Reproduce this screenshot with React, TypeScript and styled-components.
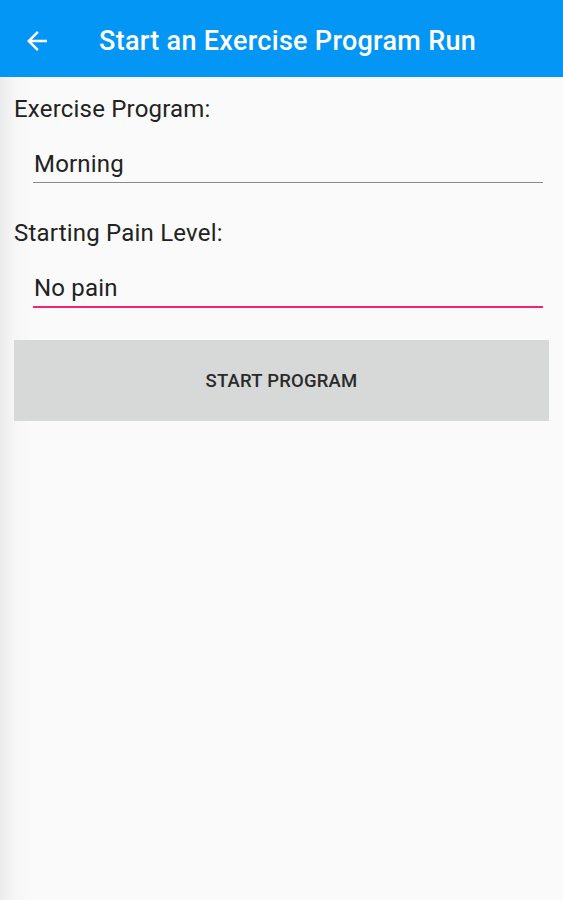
import React from "react";
import styled, { createGlobalStyle } from "styled-components";

const GlobalStyle = createGlobalStyle`
    html, body {
        margin: 0;
        padding: 0;
        background: #fafafa;
    }
    * {
        box-sizing: border-box;
    }
`;

interface FieldProps {
    label: string;
    value: string;
    focused?: boolean;
}

const Field: React.FC<FieldProps> = (props) => {
    return (
        <FieldStyle>
            <LabelStyle>{props.label}</LabelStyle>
            <InputStyle $focused={props.focused}>{props.value}</InputStyle>
        </FieldStyle>
    );
};

const BackArrow = () => (
    <svg width="30" height="30" viewBox="0 0 24 24">
        <path
            d="M20 11H7.83l5.59-5.59L12 4l-8 8 8 8 1.41-1.41L7.83 13H20v-2z"
            fill="#fff"
        />
    </svg>
);

const App: React.FC = () => {
    return (
        <PageStyle>
            <GlobalStyle />
            <HeaderStyle>
                <BackButtonStyle>
                    <BackArrow />
                </BackButtonStyle>
                <TitleStyle>Start an Exercise Program Run</TitleStyle>
            </HeaderStyle>

            <ContentStyle>
                <Field label="Exercise Program:" value="Morning" />
                <Field label="Starting Pain Level:" value="No pain" focused />
                <StartButtonStyle>START PROGRAM</StartButtonStyle>
            </ContentStyle>
        </PageStyle>
    );
};

const PageStyle = styled.div`
    min-height: 100vh;
    width: 100%;
    background: linear-gradient(to right, #ebebeb 0px, #f6f6f6 14px, #fafafa 32px);
    font-family: Roboto, "Liberation Sans", sans-serif;
`;

const HeaderStyle = styled.div`
    height: 77px;
    background-color: #0496f4;
    display: flex;
    align-items: center;
    padding: 4px 0 0 22px;
`;

const BackButtonStyle = styled.div`
    width: 30px;
    height: 30px;
    display: flex;
`;

const TitleStyle = styled.h1`
    margin: 0 0 0 47px;
    color: #fff;
    font-size: 27px;
    font-weight: 500;
    line-height: 32px;
    letter-spacing: 0.3px;
`;

const ContentStyle = styled.div`
    display: flex;
    flex-direction: column;
    padding: 18px 14px 0 14px;
`;

const FieldStyle = styled.div`
    display: flex;
    flex-direction: column;

    & + & {
        margin-top: 36px;
    }
`;

const LabelStyle = styled.div`
    font-size: 24px;
    line-height: 28px;
    letter-spacing: 0.2px;
    color: #222;
`;

const InputStyle = styled.div<{ $focused?: boolean }>`
    margin: 27px 6px 0 19px;
    font-size: 24px;
    line-height: 28px;
    letter-spacing: 0.2px;
    color: #222;
    padding: 0 0 4px 1px;
    border-bottom: ${(p) => (p.$focused ? "2px solid #f2266f" : "1px solid #8a8a8a")};
`;

const StartButtonStyle = styled.div`
    margin-top: 32px;
    height: 81px;
    background-color: #d7d8d8;
    display: flex;
    align-items: center;
    justify-content: center;
    font-size: 18.5px;
    font-weight: 500;
    color: #2a2a2a;
    letter-spacing: 0.2px;
    padding-top: 1px;
`;

export default App;
